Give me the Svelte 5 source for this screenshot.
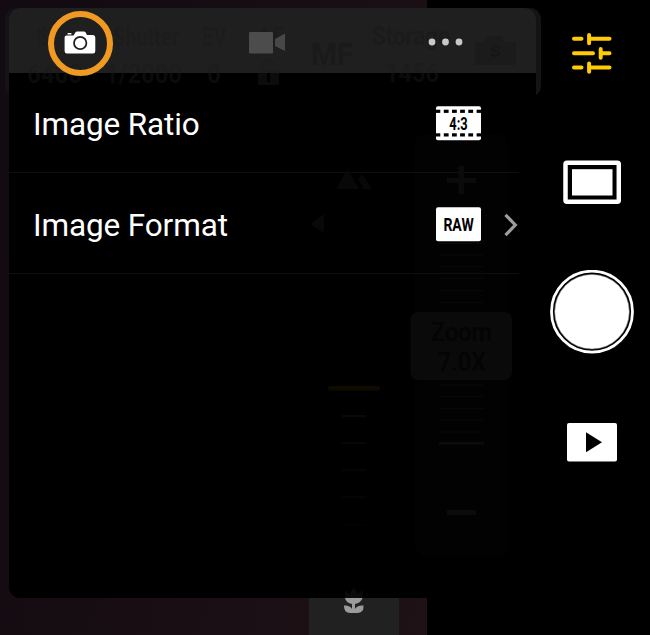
<script>
  const rows = [
    { label: 'Image Ratio', value: '4:3', film: true, more: false },
    { label: 'Image Format', value: 'RAW', film: false, more: true }
  ];
  const perforations = [
    [0, 4.3],
    [7.8, 4.8],
    [16, 4.8],
    [24.1, 4.8],
    [32.3, 4.8],
    [40.6, 4.4]
  ];
  const zoomTicks = [243, 254.5, 266, 278, 290, 302, 384.5, 396, 408, 419.5, 431.5];
  const focusTicks = [416, 443, 470, 497, 525];
</script>

<main class="screen">
  <div class="live-view"></div>
  <div class="status-plate"></div>
  <div class="macro-plate"></div>

  <section class="panel">
    <nav class="tabs">
      <button class="tab photo active" aria-label="Photo">
        <svg width="32" height="24" viewBox="0 0 32 24">
          <path fill="#fff" d="M2.500 4.500H9.500L11.500 1.200Q12 .4 13 .4H20Q21 .4 21.500 1.200L23 4H29Q31.300 4 31.300 6.500V20Q31.300 22.500 29 22.500H3Q.6 22.500 .6 20V6.500Q.6 4.500 2.500 4.500Z" />
          <rect x="3.500" y="2" width="4" height="1.600" rx=".6" fill="#fff" />
          <circle cx="16.200" cy="12" r="6.200" fill="#fff" stroke="#1f1f1f" stroke-width="1.800" />
        </svg>
      </button>
      <button class="tab video" aria-label="Video">
        <svg width="36" height="22" viewBox="0 0 36 22">
          <rect width="24" height="21.500" rx="1.300" fill="#4c4c4c" />
          <path fill="#484848" d="M26 7L36 1.500V19L26 14Z" />
        </svg>
      </button>
      <button class="tab more" aria-label="More">
        <svg width="36" height="8" viewBox="0 0 36 8">
          <g fill="#c9c9c9"><circle cx="4" cy="4" r="3.400" /><circle cx="17.500" cy="4" r="3.400" /><circle cx="31" cy="4" r="3.400" /></g>
        </svg>
      </button>
    </nav>
    <div class="rows">
      {#each rows as row}
        <div class="row">
          <span class="label">{row.label}</span>
          <svg class="badge" width="45" height="34" viewBox="0 0 45 34">
            <rect y=".3" width="45" height="34" rx="2" fill="#fff" />
            {#if row.film}
              {#each perforations as [x, width]}
                <rect {x} y="3.700" {width} height="3.200" fill="#000" />
                <rect {x} y="27.300" {width} height="3.200" fill="#000" />
              {/each}
              <text x="13.300" y="24" textLength="18.400" lengthAdjust="spacingAndGlyphs">{row.value}</text>
            {:else}
              <text x="7.400" y="24" textLength="30.300" lengthAdjust="spacingAndGlyphs">{row.value}</text>
            {/if}
          </svg>
          {#if row.more}
            <svg class="chevron" width="14" height="24" viewBox="0 0 14 24">
              <path d="M1.500 1.800L11.300 12L1.500 22.200" fill="none" stroke="#9d9d9d" stroke-width="3.200" />
            </svg>
          {/if}
        </div>
      {/each}
    </div>
  </section>

  <!-- Camera controls showing faintly through the panel -->
  <svg class="ghost" width="650" height="635" viewBox="0 0 650 635" aria-hidden="true">
    <g fill="#171717" fill-opacity=".3" font-size="26">
      <text x="37" y="46" textLength="19" lengthAdjust="spacingAndGlyphs">ISO</text>
      <text x="113" y="46" textLength="66" lengthAdjust="spacingAndGlyphs">Shutter</text>
      <text x="202" y="46" textLength="25" lengthAdjust="spacingAndGlyphs">EV</text>
      <text x="257" y="46" textLength="27" lengthAdjust="spacingAndGlyphs">AE</text>
      <text x="372" y="45" fill-opacity=".5" textLength="78" lengthAdjust="spacingAndGlyphs">Storage</text>
      <text x="311" y="65" fill-opacity=".6" font-size="32" textLength="42" lengthAdjust="spacingAndGlyphs">MF</text>
      <path fill-opacity=".5" d="M475 42H484L488 36H501L505 42H516V65H475Z" />
    </g>
    <g fill="#1a1a1a" fill-opacity=".45" font-size="26">
      <text x="27" y="83" textLength="55" lengthAdjust="spacingAndGlyphs">6400</text>
      <text x="105" y="83" textLength="77" lengthAdjust="spacingAndGlyphs">1/2000</text>
      <text x="207" y="83" textLength="14" lengthAdjust="spacingAndGlyphs">0</text>
      <text x="385" y="82" textLength="54" lengthAdjust="spacingAndGlyphs">1456</text>
      <path fill-rule="evenodd" d="M258 70V85H279V70H264V66Q264 62 268 62Q272 62 272 66H275Q274 59 268 59Q261 60 261 67V70ZM267 73H270V82H267Z" />
    </g>
    <text x="490" y="57" font-size="17" fill="#161616">S</text>
    <rect x="415" y="134" width="93" height="422" rx="10" fill="#fff" fill-opacity=".008" />
    <g fill="#080808">
      <path d="M336 189L347.500 169L359 189ZM358 179L362 174L372 189H364ZM310 224L324 214V233Z" />
      <path fill="#0b0b0b" d="M447 178H458.500V166H464V178H476V183H464V194H458.500V183H447Z" />
    </g>
    <rect x="447" y="510" width="29" height="5" fill="#0b0b0b" />
    {#each zoomTicks as y}
      <rect x="439" {y} width="45" height="1.200" fill="#080808" />
    {/each}
    <rect x="439" y="442" width="45" height="2.600" fill="#0c0c0c" />
    {#each focusTicks as y, i}
      <rect x="342" y={y - 1} width="24" height="2.200" fill="#090909" opacity={1 - i * 0.2} />
    {/each}
    <rect x="328" y="386" width="52" height="4.500" rx="2" fill="#0f0b00" />
    <rect x="410.500" y="312" width="101.500" height="68" rx="8" fill="#0a0a0a" />
    <g class="zoom-text" fill="#040404" font-size="25">
      <text x="431" y="341" textLength="61" lengthAdjust="spacingAndGlyphs">Zoom</text>
      <text x="438" y="371" textLength="48" lengthAdjust="spacingAndGlyphs">7.0X</text>
    </g>
    <path fill="#0a0a0a" d="M345 598V590L350 594L353.500 587L357.500 594L362.500 590V598Z" />
    <path fill="#9b9b9b" d="M345 598H362.500Q361 603 355 604V609Q357 605 363.500 605.500Q364 612.500 358 613H349.500Q343.500 612 344 605.500Q350 605 352 609V604Q346 603 345 598Z" />
  </svg>

  <div class="tab-highlight"></div>

  <aside class="controls">
    <svg class="settings" width="42" height="42" viewBox="0 0 42 42">
      <g stroke="#ffcb05" stroke-width="4" stroke-linecap="round">
        <path d="M3 6.800H10.500M20 6.800H38.500M3 21.200H22M31 21.200H38.500M3 35.500H10.500M20 35.500H38.500" />
        <path d="M18.100 3V11.300M29.700 17V25.700M18.100 31.500V39.800" />
      </g>
    </svg>
    <svg class="frame" width="58" height="44" viewBox="0 0 58 44">
      <rect x="2.500" y="2.700" width="53.300" height="39" rx="1.500" fill="#000" stroke="#fff" stroke-width="4.500" />
      <rect x="9" y="9.200" width="40.500" height="26.300" fill="#fff" />
    </svg>
    <svg class="shutter" width="84" height="84" viewBox="0 0 84 84">
      <circle cx="42" cy="41.700" r="40.500" fill="#000" stroke="#fff" stroke-width="2.800" />
      <circle cx="42" cy="41.700" r="37.300" fill="#fff" stroke="#888" stroke-width=".6" />
    </svg>
    <svg class="play" width="50" height="39" viewBox="0 0 50 39">
      <rect width="50" height="38.500" rx="2" fill="#fff" />
      <path d="M19 9.300V29.300L35 19.300Z" fill="#000" />
    </svg>
  </aside>
</main>

<style>
  :global(body) { margin: 0; background: #000; }
  .screen {
    position: relative;
    display: flex;
    box-sizing: border-box;
    width: 650px;
    height: 635px;
    padding: 8px 0 0 9px;
    overflow: hidden;
    background: #000;
    font-family: Roboto, "Liberation Sans", sans-serif;
  }
  .live-view {
    position: absolute;
    inset: 0 auto 0 0;
    width: 427px;
    background: linear-gradient(105deg, #130b12 0%, #170d13 50%, #1f1216 100%);
  }
  .status-plate {
    position: absolute;
    left: 5px;
    top: 8px;
    width: 536px;
    height: 89px;
    border-radius: 11px;
    background: #151315;
  }
  .macro-plate {
    position: absolute;
    left: 309px;
    top: 590px;
    width: 90px;
    height: 45px;
    background: #212121;
  }
  .panel {
    position: relative;
    width: 527px;
    height: 590px;
    border-radius: 11px 11px 0 11px;
    overflow: hidden;
    background: #000;
  }
  .tabs { display: flex; align-items: center; height: 65px; background: #1f1f1f; }
  .tab { position: relative; z-index: 2; display: flex; padding: 0; border: 0; background: none; }
  .tab svg { display: block; }
  .photo { margin: 5px 0 0 55px; }
  .video { margin: 4px 0 0 153px; }
  .more { margin: 3px 0 0 143px; }
  .rows { width: 510px; }
  .row {
    display: flex;
    align-items: center;
    box-sizing: border-box;
    height: 101px;
    padding-left: 24px;
    border-bottom: 1px solid #0e0e0e;
  }
  .row:first-child { margin-top: -1px; }
  .label {
    position: relative;
    z-index: 2;
    width: 403px;
    margin-top: 6px;
    color: #fff;
    font-size: 31.500px;
    letter-spacing: -0.120px;
    line-height: 40px;
  }
  .badge {
    position: relative;
    z-index: 2;
    display: block;
    margin-top: 2px;
    overflow: visible;
    font-size: 18.500px;
    font-weight: 700;
  }
  .chevron { position: relative; z-index: 2; margin: 3px 0 0 23px; }
  .ghost { position: absolute; inset: 0; font-weight: 700; pointer-events: none; }
  .zoom-text { font-weight: 500; }
  .tab-highlight {
    position: absolute;
    left: 48px;
    top: 11px;
    box-sizing: border-box;
    width: 65px;
    height: 65px;
    border: 6px solid #f09a24;
    border-radius: 50%;
  }
  .controls { display: flex; flex-direction: column; align-items: center; width: 112px; }
  .controls svg { display: block; flex: none; }
  .settings { margin-top: 24px; }
  .frame { margin-top: 86px; }
  .shutter { margin-top: 66px; }
  .play { margin-top: 69px; }
</style>
